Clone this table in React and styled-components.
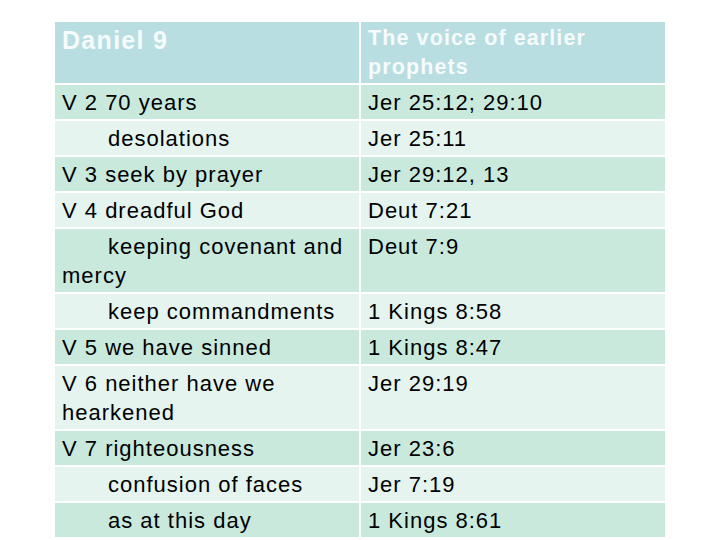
import React from 'react';
import styled, { createGlobalStyle } from 'styled-components';

const GlobalStyle = createGlobalStyle`
  html, body {
    margin: 0;
    padding: 0;
    background: #ffffff;
  }
  body {
    font-family: "Liberation Sans", Arial, sans-serif;
  }
`;

const Page = styled.div`
  width: 720px;
  height: 540px;
  padding: 22px 0 0 55px;
  box-sizing: border-box;
  overflow: hidden;
`;

const Table = styled.div`
  width: 610px;
  display: grid;
  grid-template-columns: 304px 304px;
  column-gap: 2px;
  row-gap: 2px;
  background: #ffffff;
`;

const HeadCell = styled.div`
  background: #b8dee2;
  color: #f6fbfb;
  font-weight: bold;
  font-size: ${p => (p.$big ? '25px' : '21.5px')};
  letter-spacing: ${p => (p.$big ? '1.3px' : '1.1px')};
  line-height: 29px;
  padding: ${p => (p.$big ? '4px' : '2px')} 7px 1px 7px;
  height: 61px;
  box-sizing: border-box;
`;

const Cell = styled.div`
  background: ${p => (p.$dark ? '#c9e9dd' : '#e5f4ee')};
  color: #000000;
  font-size: 22px;
  letter-spacing: 1px;
  line-height: 29px;
  padding: 3px 7px 2px 7px;
  text-indent: ${p => (p.$indent ? '46px' : '0')};
  min-height: ${p => (p.$tall ? '63px' : '34px')};
  box-sizing: border-box;
`;

const rows = [
  { left: 'V 2 70 years', right: 'Jer 25:12; 29:10' },
  { left: 'desolations', right: 'Jer 25:11', indent: true },
  { left: 'V 3 seek by prayer', right: 'Jer 29:12, 13' },
  { left: 'V 4 dreadful God', right: 'Deut 7:21' },
  { left: 'keeping covenant and mercy', right: 'Deut 7:9', indent: true, tall: true },
  { left: 'keep commandments', right: '1 Kings 8:58', indent: true },
  { left: 'V 5 we have sinned', right: '1 Kings 8:47' },
  { left: 'V 6 neither have we hearkened', right: 'Jer 29:19', tall: true },
  { left: 'V 7 righteousness', right: 'Jer 23:6' },
  { left: 'confusion of faces', right: 'Jer 7:19', indent: true },
  { left: 'as at this day', right: '1 Kings 8:61', indent: true },
];

export default function App() {
  return (
    <>
      <GlobalStyle />
      <Page>
        <Table>
          <HeadCell $big>Daniel 9</HeadCell>
          <HeadCell>The voice of earlier prophets</HeadCell>
          {rows.map((r, i) => (
            <React.Fragment key={i}>
              <Cell $dark={i % 2 === 0} $indent={r.indent} $tall={r.tall}>
                {r.left}
              </Cell>
              <Cell $dark={i % 2 === 0} $tall={r.tall}>
                {r.right}
              </Cell>
            </React.Fragment>
          ))}
        </Table>
      </Page>
    </>
  );
}
